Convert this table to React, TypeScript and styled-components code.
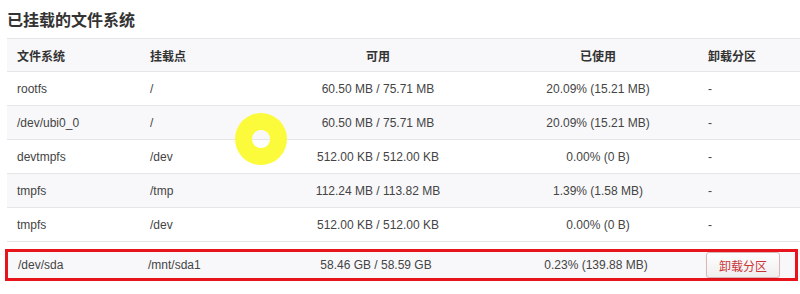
import React from "react";
import styled, { createGlobalStyle } from "styled-components";

const Global = createGlobalStyle`
  html, body { margin: 0; padding: 0; background: #fff; overflow: hidden; }
  body { font-family: "Liberation Sans", Arial, "Noto Sans CJK SC", sans-serif; color: #333; }
`;

const Page = styled.div`
  position: relative;
  width: 800px;
  height: 294px;
`;

const Title = styled.h3`
  margin: 0;
  padding: 11px 0 0 7px;
  height: 27px;
  font-size: 16px;
  line-height: 20px;
  font-weight: bold;
  color: #333;
`;

const Table = styled.div`
  margin-left: 7px;
  border-top: 1px solid #e6e6e8;
`;

const cols = "133px 118px 240px 200px 1fr";

const Row = styled.div<{ $shade?: boolean; $h?: number }>`
  display: grid;
  grid-template-columns: ${cols};
  align-items: center;
  height: ${(p) => p.$h ?? 33}px;
  background: ${(p) => (p.$shade ? "#f8f8fa" : "#fff")};
  border-bottom: 1px solid #e6e6e8;
  font-size: 12px;
`;

const Cell = styled.div<{ $center?: boolean; $bold?: boolean }>`
  padding: 0 10px;
  text-align: ${(p) => (p.$center ? "center" : "left")};
  font-weight: ${(p) => (p.$bold ? "bold" : "normal")};
  color: ${(p) => (p.$bold ? "#333" : "#444")};
  white-space: nowrap;
`;

const Highlight = styled.div`
  margin: 7px 0 0 5px;
  width: 787px;
  border: 3px solid #e8141c;
  display: grid;
  grid-template-columns: 130px 118px 240px 200px 1fr;
  align-items: center;
  height: 26px;
  background: #f8f8fa;
  font-size: 12px;
`;

const Button = styled.button`
  height: 26px;
  width: 74px;
  margin-left: 0;
  padding: 0;
  border: 1px solid #dcb6b6;
  border-radius: 3px;
  background: linear-gradient(#ffffff, #f0eeee);
  color: #c8363a;
  font-family: "Noto Sans CJK SC", sans-serif;
  font-size: 12px;
  box-shadow: 0 1px 1px rgba(0, 0, 0, 0.08);
`;

const Cursor = styled.div`
  position: absolute;
  left: 235px;
  top: 113px;
  width: 52px;
  height: 52px;
  border-radius: 50%;
  background: radial-gradient(circle, transparent 8.5px, #fbfb3c 9.5px);
`;

type R = [string, string, string, string];
const rows: R[] = [
  ["rootfs", "/", "60.50 MB / 75.71 MB", "20.09% (15.21 MB)"],
  ["/dev/ubi0_0", "/", "60.50 MB / 75.71 MB", "20.09% (15.21 MB)"],
  ["devtmpfs", "/dev", "512.00 KB / 512.00 KB", "0.00% (0 B)"],
  ["tmpfs", "/tmp", "112.24 MB / 113.82 MB", "1.39% (1.58 MB)"],
  ["tmpfs", "/dev", "512.00 KB / 512.00 KB", "0.00% (0 B)"],
];

export default function App() {
  return (
    <Page>
      <Global />
      <Title>已挂载的文件系统</Title>
      <Table>
        <Row $shade $h={32}>
          <Cell $bold>文件系统</Cell>
          <Cell $bold>挂载点</Cell>
          <Cell $bold $center>可用</Cell>
          <Cell $bold $center>已使用</Cell>
          <Cell $bold>卸载分区</Cell>
        </Row>
        {rows.map((r, i) => (
          <Row key={i} $shade={i % 2 === 1}>
            <Cell>{r[0]}</Cell>
            <Cell>{r[1]}</Cell>
            <Cell $center>{r[2]}</Cell>
            <Cell $center>{r[3]}</Cell>
            <Cell>-</Cell>
          </Row>
        ))}
      </Table>
      <Highlight>
        <Cell>/dev/sda</Cell>
        <Cell>/mnt/sda1</Cell>
        <Cell $center>58.46 GB / 58.59 GB</Cell>
        <Cell $center>0.23% (139.88 MB)</Cell>
        <Cell>
          <Button>卸载分区</Button>
        </Cell>
      </Highlight>
      <Cursor />
    </Page>
  );
}
